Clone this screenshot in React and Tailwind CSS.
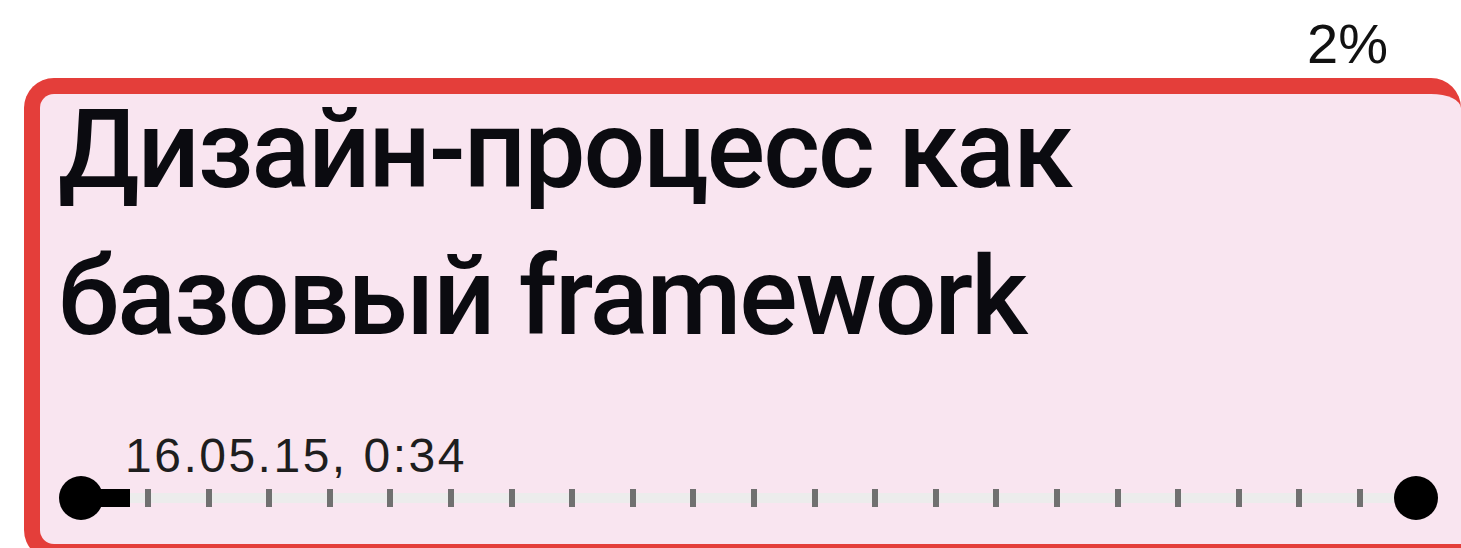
const TICKS = Array.from({ length: 21 }, (_, i) => i);

function Timeline() {
  return (
    <div className="flex h-[42px] items-center pl-[19px] pr-[23px]">
      <div className="h-[44px] w-[44px] shrink-0 rounded-full bg-black" />
      <div className="-ml-[2px] h-[18px] w-[29px] shrink-0 bg-black" />
      <div className="flex h-[10px] flex-1 items-center justify-between bg-[#ececec] pl-[15px] pr-[31px]">
        {TICKS.map((i) => (
          <span key={i} className="h-[18px] w-[6px] bg-[#707070]" />
        ))}
      </div>
      <div className="h-[44px] w-[44px] shrink-0 rounded-full bg-black" />
    </div>
  );
}

export default function App() {
  return (
    <div className="h-[548px] w-[1461px] overflow-hidden bg-white">
      <div className="flex h-[78px] justify-end pr-[73px] pt-[16px]">
        <span className="font-['Liberation_Sans',Arial,sans-serif] text-[56px] leading-none text-[#111]">
          2%
        </span>
      </div>

      {/* card runs off the right edge, so its right border is left out */}
      <div className="ml-[24px] flex h-[482px] w-[1437px] flex-col rounded-l-[30px] rounded-tr-[30px] border-[16px] border-r-0 border-[#e43e3a] bg-[#f9e5f0]">
        <h1 className="-mt-[17px] pl-[18px] font-['Roboto',sans-serif] text-[109px] font-medium leading-[147px] tracking-[-2px] text-[#0b0b10]">
          Дизайн-процесс как
          <br />
          базовый framework
        </h1>

        <div className="mt-auto pb-[25px]">
          <p className="pl-[85px] font-['Liberation_Sans',Arial,sans-serif] text-[48px] leading-[42px] tracking-[2.5px] text-[#1e1e1e]">
            16.05.15, 0:34
          </p>
          <Timeline />
        </div>
      </div>
    </div>
  );
}
